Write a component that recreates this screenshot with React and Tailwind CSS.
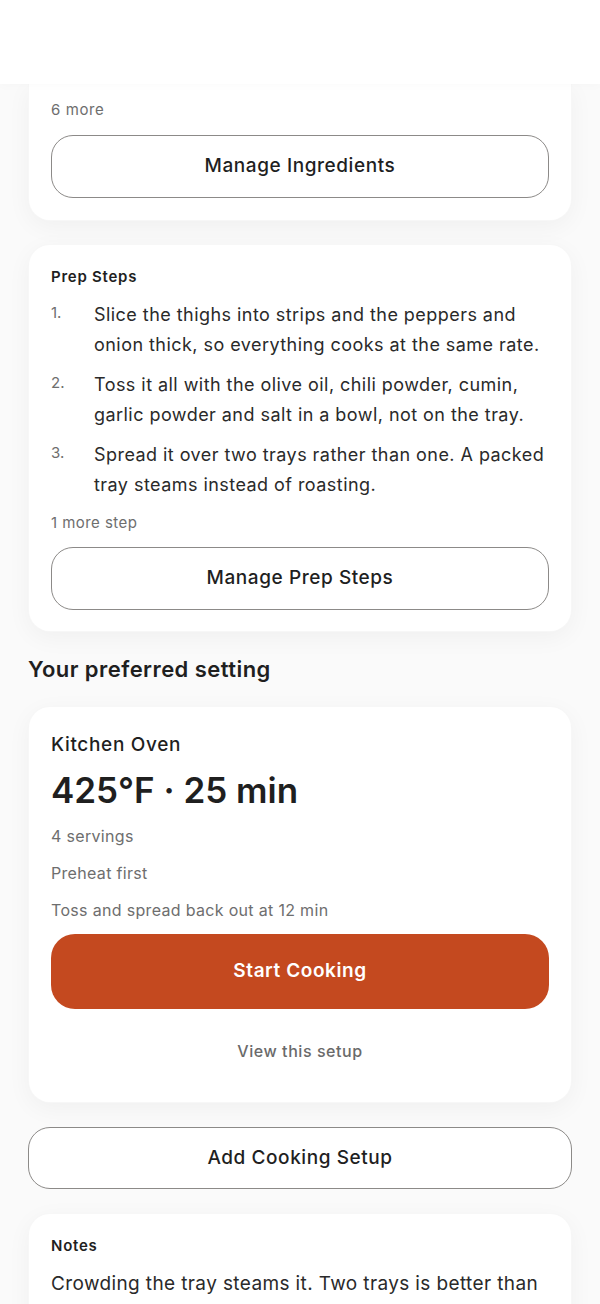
import React from 'react';

const steps = [
    "Slice the thighs into strips and the peppers and onion thick, so everything cooks at the same rate.",
    "Toss it all with the olive oil, chili powder, cumin, garlic powder and salt in a bowl, not on the tray.",
    "Spread it over two trays rather than one. A packed tray steams instead of roasting.",
];

const Card = ({ className = '', children }) => (
    <div className={`bg-white rounded-[22px] border border-black/[0.03] shadow-[0_6px_24px_rgba(0,0,0,0.045)] px-[22px] ${className}`}>
        {children}
    </div>
);

const OutlineButton = ({ children, className = '' }) => (
    <button className={`w-full flex items-center justify-center rounded-[22px] border border-[#8c8a88] bg-white text-[19px] tracking-[0.03em] font-medium text-[#1f1f1f] ${className}`}>
        {children}
    </button>
);

export default function App() {
    return (
        <div className="min-h-screen bg-[#fafafa] font-['Inter',sans-serif] text-[#1f1f1f] overflow-hidden h-[1304px]">
            {/* top bar, list scrolled beneath it */}
            <div className="h-[84px] bg-white relative z-10 shadow-[0_2px_10px_rgba(0,0,0,0.02)]" />

            <div className="px-[28px]">
                {/* Ingredients card (scrolled) */}
                <Card className="rounded-t-none border-t-0 pt-[16px] pb-[22px]">
                    <p className="text-[15px] leading-[20px] tracking-[0.04em] text-[#6e6e6e]">6 more</p>
                    <OutlineButton className="mt-[15px] h-[63px]">Manage Ingredients</OutlineButton>
                </Card>

                {/* Prep steps */}
                <Card className="mt-[23px] pt-[22px] pb-[21px]">
                    <h3 className="text-[15px] leading-[20px] tracking-[0.05em] font-semibold">Prep Steps</h3>
                    <ol className="mt-[13px] flex flex-col gap-[10px]">
                        {steps.map((s, i) => (
                            <li key={i} className="flex">
                                <span className="w-[43px] shrink-0 text-[15px] leading-[26px] text-[#6e6e6e]">{i + 1}.</span>
                                <span className="text-[18px] leading-[30px] tracking-[0.025em] text-[#2a2a2a]">{s}</span>
                            </li>
                        ))}
                    </ol>
                    <p className="mt-[13px] text-[15px] leading-[20px] tracking-[0.03em] text-[#6e6e6e]">1 more step</p>
                    <OutlineButton className="mt-[14px] h-[63px]">Manage Prep Steps</OutlineButton>
                </Card>

                <h2 className="mt-[23px] text-[22px] leading-[28px] tracking-[0.02em] font-semibold">Your preferred setting</h2>

                {/* Preferred setting */}
                <Card className="mt-[23px] pt-[24px] pb-[40px]">
                    <p className="text-[19px] leading-[28px] tracking-[0.035em] font-medium">Kitchen Oven</p>
                    <p className="mt-[10px] text-[35px] leading-[42px] font-semibold">425°F · 25 min</p>
                    <div className="mt-[14px] flex flex-col gap-[15px] text-[16px] leading-[22px] tracking-[0.02em] text-[#6e6e6e]">
                        <p>4 servings</p>
                        <p>Preheat first</p>
                        <p>Toss and spread back out at 12 min</p>
                    </div>
                    <button className="mt-[13px] w-full h-[75px] rounded-[24px] bg-[#c4491f] text-white text-[19px] tracking-[0.03em] font-semibold">
                        Start Cooking
                    </button>
                    <p className="mt-[31px] text-center text-[16px] leading-[22px] tracking-[0.035em] font-medium text-[#6a6a6a]">View this setup</p>
                </Card>

                <OutlineButton className="mt-[24px] h-[62px]">Add Cooking Setup</OutlineButton>

                {/* Notes */}
                <Card className="mt-[24px] pt-[22px] pb-[22px]">
                    <h3 className="text-[15px] leading-[20px] tracking-[0.05em] font-semibold">Notes</h3>
                    <p className="mt-[12px] text-[19px] leading-[32px] tracking-[0.02em] text-[#2a2a2a]">
                        Crowding the tray steams it. Two trays is better than one crowded tray, every time.
                    </p>
                </Card>
            </div>
        </div>
    );
}
